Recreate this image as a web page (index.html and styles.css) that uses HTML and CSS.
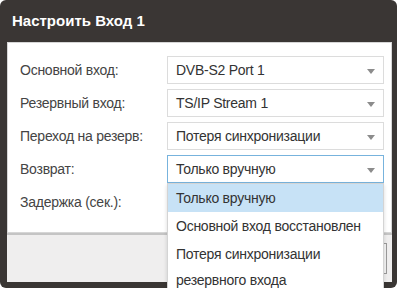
FILE: index.html
```html
<!DOCTYPE html>
<html lang="ru">
<head>
<meta charset="utf-8">
<link rel="stylesheet" href="styles.css">
</head>
<body>
<div class="dialog">
  <div class="title">Настроить Вход 1</div>
  <div class="panel">
    <div class="row">
      <div class="label">Основной вход:</div>
      <div class="select"><span>DVB-S2 Port 1</span><i class="arrow"></i></div>
    </div>
    <div class="row">
      <div class="label">Резервный вход:</div>
      <div class="select"><span>TS/IP Stream 1</span><i class="arrow"></i></div>
    </div>
    <div class="row">
      <div class="label">Переход на резерв:</div>
      <div class="select"><span>Потеря синхронизации</span><i class="arrow"></i></div>
    </div>
    <div class="row">
      <div class="label">Возврат:</div>
      <div class="select focused"><span>Только вручную</span><i class="arrow"></i>
        <ul class="menu">
          <li class="active">Только вручную</li>
          <li>Основной вход восстановлен</li>
          <li>Потеря синхронизации резервного входа</li>
        </ul>
      </div>
    </div>
    <div class="row">
      <div class="label">Задержка (сек.):</div>
      <div class="input"></div>
    </div>
  </div>
  <div class="footer">
    <div class="btn"></div>
  </div>
</div>
</body>
</html>
```

FILE: styles.css
```css
html, body {
  margin: 0;
  padding: 0;
  background: #ffffff;
}
body {
  font-family: "Liberation Sans", Arial, sans-serif;
}
.dialog {
  width: 385px;
  background: #3a3634;
  border-radius: 6px;
  padding: 0 5px 6px 7px;
}
.title {
  height: 42px;
  line-height: 42px;
  padding-left: 5px;
  color: #ffffff;
  font-weight: bold;
  font-size: 15px;
}
.panel {
  background: #ffffff;
  border: 1px solid #d6d6d6;
  padding: 13px 7px 16px 12px;
  display: flex;
  flex-direction: column;
  gap: 5px;
}
.row {
  display: flex;
  align-items: center;
  height: 28px;
}
.label {
  width: 147px;
  color: #444444;
  font-size: 14px;
  letter-spacing: -0.25px;
}
.select, .input {
  position: relative;
  width: 217px;
  height: 28px;
  box-sizing: border-box;
  border: 1px solid #dcdcdc;
  background: #ffffff;
  display: flex;
  align-items: center;
  padding-left: 8px;
  color: #333333;
  font-size: 14px;
  letter-spacing: -0.25px;
}
.select.focused {
  border-color: #77b3dd;
}
.arrow {
  position: absolute;
  right: 8px;
  top: 12px;
  width: 0;
  height: 0;
  border-left: 4.5px solid transparent;
  border-right: 4.5px solid transparent;
  border-top: 5px solid #8c8c8c;
}
.menu {
  position: absolute;
  left: -1px;
  top: 27px;
  width: 217px;
  box-sizing: border-box;
  margin: 0;
  padding: 0;
  list-style: none;
  background: #ffffff;
  border: 1px solid #d4d4d4;
  box-shadow: 0 2px 4px rgba(0,0,0,0.15);
  z-index: 5;
}
.menu li {
  padding: 1px 8px;
  line-height: 26px;
  color: #333333;
  font-size: 14px;
  letter-spacing: -0.25px;
}
.menu li.active {
  background: #c7e2f6;
}
.footer {
  height: 47px;
  background: #efeeee;
  border-top: 2px solid #c4c4c4;
  display: flex;
  justify-content: flex-end;
  align-items: center;
  padding-right: 5px;
}
.btn {
  height: 31px;
  width: 60px;
  box-sizing: border-box;
  border: 1px solid #9a9a9a;
  background: #f4f4f4;
}
```
